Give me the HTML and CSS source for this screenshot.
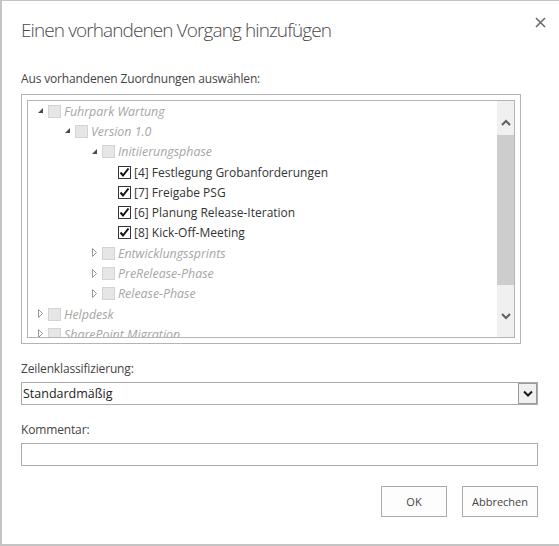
FILE: index.html
```html
<!DOCTYPE html>
<html lang="de">
<head>
    <meta charset="UTF-8">
    <title>Einen vorhandenen Vorgang hinzufügen</title>
    <link rel="stylesheet" href="styles.css">
</head>
<body>
    <div class="dialog">
        <div class="dialog-head">
            <h1 class="dialog-title">Einen vorhandenen Vorgang hinzufügen</h1>
            <button class="close" title="Schließen">
                <svg width="11" height="11" viewBox="0 0 11 11"><path d="M1 1L10 10M10 1L1 10" stroke="#6a6a6a" stroke-width="1.6" fill="none"/></svg>
            </button>
        </div>

        <div class="field-label first">Aus vorhandenen Zuordnungen auswählen:</div>
        <div class="tree-frame">
            <div class="tree-box">
                <ul class="tree">
                    <li class="row lvl-0"><span class="toggle open"></span><span class="box"></span><span class="name muted">Fuhrpark Wartung</span></li>
                    <li class="row lvl-1"><span class="toggle open"></span><span class="box"></span><span class="name muted">Version 1.0</span></li>
                    <li class="row lvl-2"><span class="toggle open"></span><span class="box"></span><span class="name muted">Initiierungsphase</span></li>
                    <li class="row leaf"><span class="box checked"></span><span class="name">[4] Festlegung Grobanforderungen</span></li>
                    <li class="row leaf"><span class="box checked"></span><span class="name">[7] Freigabe PSG</span></li>
                    <li class="row leaf"><span class="box checked"></span><span class="name">[6] Planung Release-Iteration</span></li>
                    <li class="row leaf"><span class="box checked"></span><span class="name">[8] Kick-Off-Meeting</span></li>
                    <li class="row lvl-2"><span class="toggle closed"></span><span class="box"></span><span class="name muted">Entwicklungssprints</span></li>
                    <li class="row lvl-2"><span class="toggle closed"></span><span class="box"></span><span class="name muted">PreRelease-Phase</span></li>
                    <li class="row lvl-2"><span class="toggle closed"></span><span class="box"></span><span class="name muted">Release-Phase</span></li>
                    <li class="row lvl-0"><span class="toggle closed"></span><span class="box"></span><span class="name muted">Helpdesk</span></li>
                    <li class="row lvl-0"><span class="toggle closed"></span><span class="box"></span><span class="name muted">SharePoint Migration</span></li>
                </ul>
                <div class="scrollbar">
                    <div class="sb-btn up">
                        <svg width="10" height="7" viewBox="0 0 10 7"><path d="M1 6L5 2L9 6" stroke="#606060" stroke-width="2" fill="none"/></svg>
                    </div>
                    <div class="sb-thumb"></div>
                    <div class="sb-track"></div>
                    <div class="sb-btn down">
                        <svg width="10" height="7" viewBox="0 0 10 7"><path d="M1 1L5 5L9 1" stroke="#606060" stroke-width="2" fill="none"/></svg>
                    </div>
                </div>
            </div>
        </div>

        <div class="field-label">Zeilenklassifizierung:</div>
        <div class="select">
            <span class="select-value">Standardmäßig</span>
            <span class="select-btn">
                <svg width="10" height="7" viewBox="0 0 10 7"><path d="M1 1.5L5 5.5L9 1.5" stroke="#1a1a1a" stroke-width="2" fill="none"/></svg>
            </span>
        </div>

        <div class="field-label">Kommentar:</div>
        <input class="text-input" type="text">

        <div class="actions">
            <button class="btn ok">OK</button>
            <button class="btn cancel">Abbrechen</button>
        </div>
    </div>
</body>
</html>
```

FILE: styles.css
```css
html, body {
    margin: 0;
    padding: 0;
    background: #fff;
}
body {
    font-family: "Open Sans", "Noto Sans", sans-serif;
    font-size: 12px;
    color: #444;
}
.dialog {
    width: 559px;
    height: 546px;
    box-sizing: border-box;
    border-left: 2px solid #c4c4c4;
    border-top: 1px solid #c4c4c4;
    border-bottom: 2px solid #c4c4c4;
    padding: 0 21px 0 19px;
    overflow: hidden;
}
.dialog-head {
    display: flex;
    justify-content: space-between;
    align-items: flex-start;
}
.dialog-title {
    margin: 14px 0 0 0;
    font-weight: 300;
    font-size: 19px;
    line-height: 30px;
    color: #4a4a4a;
    letter-spacing: -0.9px;
}
.close {
    border: none;
    background: none;
    padding: 0;
    margin: 16px -8px 0 0;
    width: 11px;
    height: 11px;
    cursor: pointer;
    display: flex;
}
.field-label {
    margin-top: 16px;
    line-height: 18px;
    color: #444;
    letter-spacing: -0.15px;
}
.field-label.first {
    margin-top: 25px;
}
.tree-frame {
    margin-top: 6px;
    width: 500px;
    height: 250px;
    box-sizing: border-box;
    border: 1px solid #b4b4b4;
    padding: 5px;
}
.tree-box {
    height: 238px;
    box-sizing: border-box;
    border: 1px solid #b4b4b4;
    display: flex;
    overflow: hidden;
}
.tree {
    list-style: none;
    margin: 0;
    padding: 0;
    flex: 1;
    overflow: hidden;
}
.row {
    display: flex;
    align-items: center;
    height: 20.3px;
    white-space: nowrap;
}
.lvl-0 { padding-left: 8px; }
.lvl-1 { padding-left: 35px; }
.lvl-2 { padding-left: 62px; }
.leaf { padding-left: 90px; }
.toggle {
    width: 10px;
    height: 10px;
    margin-right: 2px;
    position: relative;
}
.toggle.open::after {
    content: "";
    position: absolute;
    left: 2px;
    top: 2px;
    border-style: solid;
    border-width: 0 0 5px 5px;
    border-color: transparent transparent #4a4a4a transparent;
}
.toggle.closed::after {
    content: "";
    position: absolute;
    left: 2px;
    top: 0;
    width: 5px;
    height: 9px;
    background: url("data:image/svg+xml,%3Csvg xmlns='http://www.w3.org/2000/svg' width='5' height='9'%3E%3Cpath d='M0.5 0.5L4.5 4.5L0.5 8.5Z' fill='none' stroke='%23999' stroke-width='1'/%3E%3C/svg%3E");
}
.box {
    width: 13px;
    height: 13px;
    box-sizing: border-box;
    border: 1px solid #d4d4d4;
    background: #e6e6e6;
    flex: none;
}
.box.checked {
    border: 1px solid #333;
    background: #fff url("data:image/svg+xml,%3Csvg xmlns='http://www.w3.org/2000/svg' width='11' height='11'%3E%3Cpath d='M1.5 5.5L4 8.5L9.5 1.5' fill='none' stroke='%23111' stroke-width='2'/%3E%3C/svg%3E") no-repeat center;
}
.name {
    margin-left: 3px;
    color: #333;
}
.name.muted {
    color: #a6a6a6;
    font-style: italic;
    font-size: 12.4px;
}
.scrollbar {
    width: 17px;
    flex: none;
    background: #f0f0f0;
    display: flex;
    flex-direction: column;
}
.sb-btn {
    height: 34px;
    display: flex;
    justify-content: center;
    align-items: center;
}
.sb-btn.up { padding-top: 8px; box-sizing: border-box; }
.sb-btn.down { padding-bottom: 8px; box-sizing: border-box; }
.sb-thumb {
    height: 150px;
    background: #cdcdcd;
}
.sb-track {
    flex: 1;
}
.select {
    margin-top: 4px;
    height: 23px;
    box-sizing: border-box;
    border: 1px solid #ababab;
    display: flex;
    align-items: center;
    justify-content: space-between;
}
.select-value {
    padding-left: 1px;
    font-size: 12.5px;
    color: #222;
}
.select-btn {
    width: 19px;
    height: 21px;
    box-sizing: border-box;
    border: 1px solid #9a9a9a;
    background: #f0f0f0;
    display: flex;
    align-items: center;
    justify-content: center;
}
.text-input {
    display: block;
    margin-top: 4px;
    width: 100%;
    height: 23px;
    box-sizing: border-box;
    border: 1px solid #ababab;
    padding: 0 4px;
    font: inherit;
}
.actions {
    display: flex;
    justify-content: flex-end;
    gap: 15px;
    margin-top: 20px;
}
.btn {
    height: 31px;
    box-sizing: border-box;
    border: 1px solid #ababab;
    background: #fdfdfd;
    color: #444;
    font-family: inherit;
    font-size: 11px;
    padding: 0;
    cursor: pointer;
}
.btn.ok { width: 66px; }
.btn.cancel { width: 76px; }
```
